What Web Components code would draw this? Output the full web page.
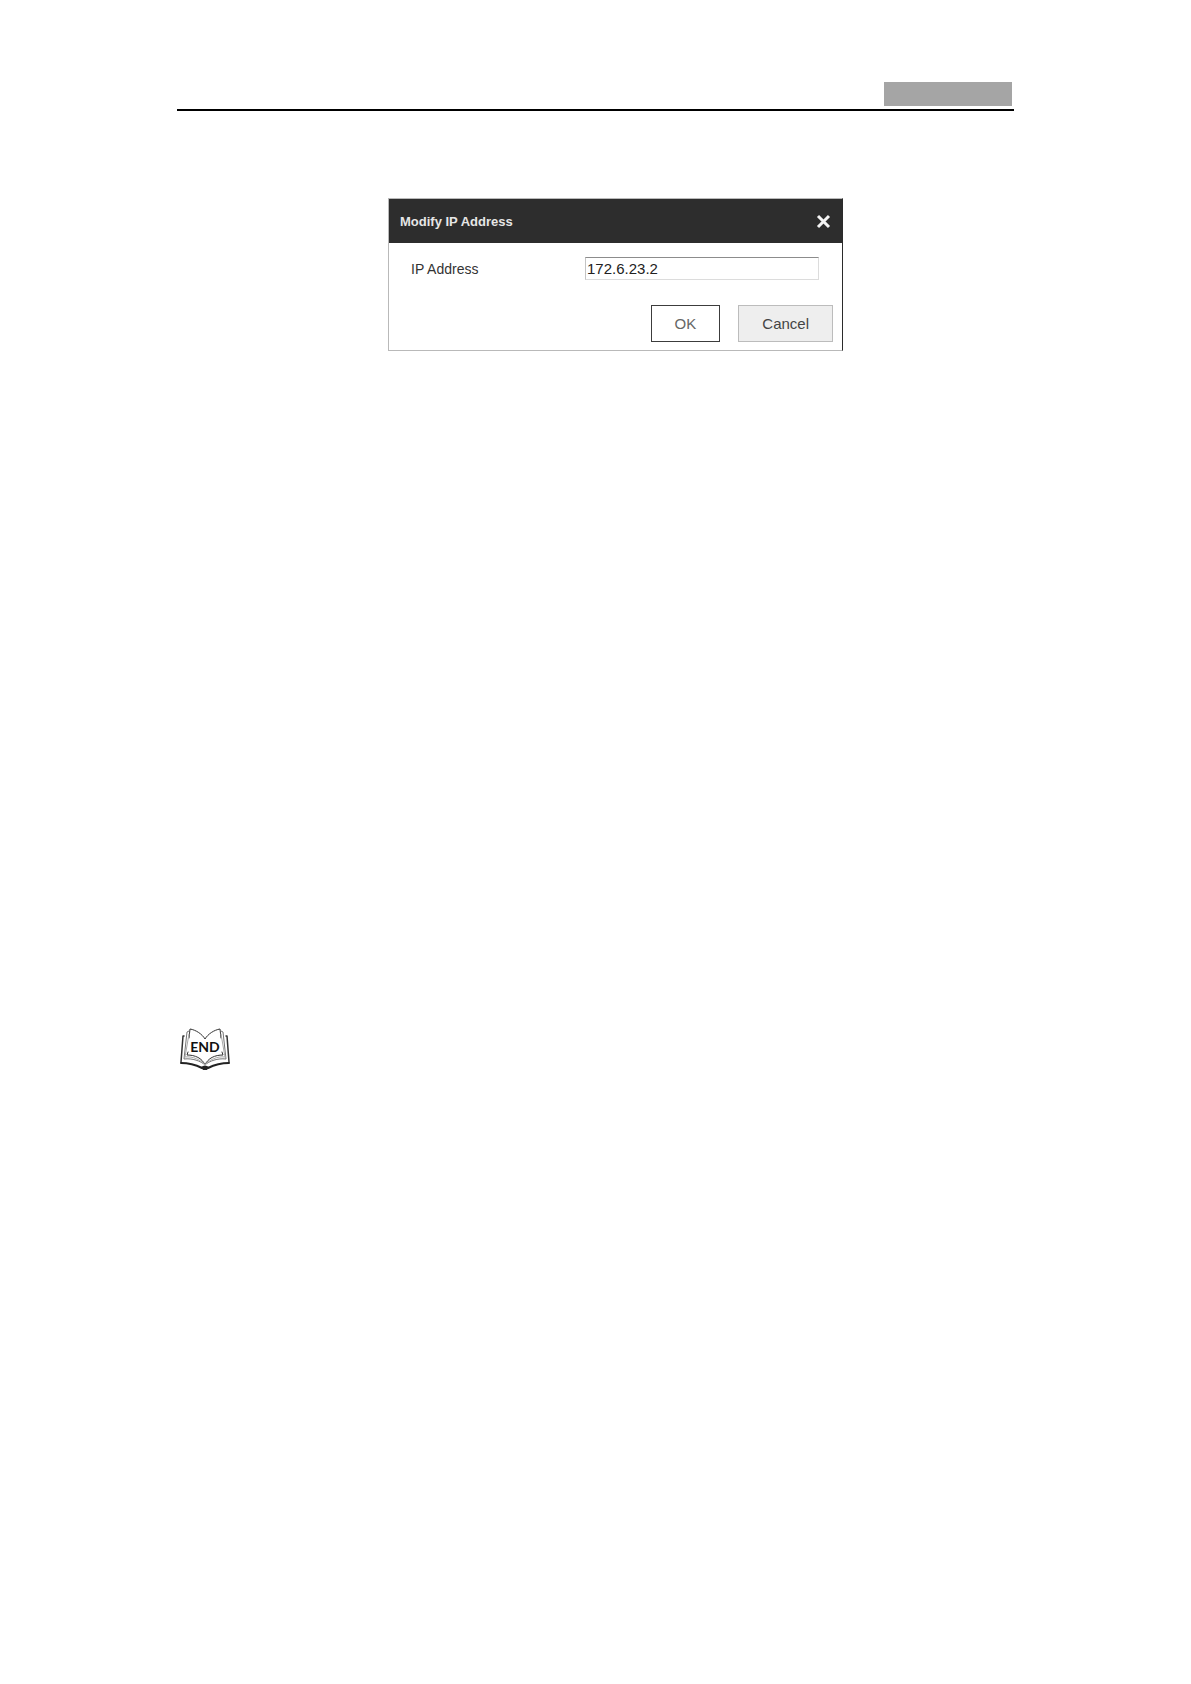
<!DOCTYPE html>
<html lang="en">
<head>
<meta charset="UTF-8">
<meta name="viewport" content="width=device-width, initial-scale=1">
<title>Modify IP Address</title>
<style>
    body {
        margin: 0;
        background: #fff;
        color: #333;
        font-family: "Liberation Sans", Arial, sans-serif;
    }
</style>
</head>
<body>
<manual-page>
    <page-header slot="header"></page-header>
    <ip-dialog heading="Modify IP Address">
        <text-field label="IP Address" value="172.6.23.2"></text-field>
        <dialog-button slot="actions" kind="primary">OK</dialog-button>
        <dialog-button slot="actions">Cancel</dialog-button>
    </ip-dialog>
    <end-mark slot="end"></end-mark>
</manual-page>

<script>
class ManualPage extends HTMLElement {
    constructor() {
        super();
        this.attachShadow({ mode: 'open' });
    }

    connectedCallback() {
        this.shadowRoot.innerHTML = `
            <style>
                :host {
                    display: flex;
                    flex-direction: column;
                    box-sizing: border-box;
                    min-height: 100vh;
                    max-width: 837px;
                    margin: 0 auto;
                    padding: 82px 0;
                }

                main {
                    display: flex;
                    justify-content: center;
                    padding: 87px 0 0 40px;
                }

                footer {
                    margin-top: 677px;
                }
            </style>
            <slot name="header"></slot>
            <main><slot></slot></main>
            <footer><slot name="end"></slot></footer>
        `;
    }
}

class PageHeader extends HTMLElement {
    constructor() {
        super();
        this.attachShadow({ mode: 'open' });
    }

    connectedCallback() {
        this.shadowRoot.innerHTML = `
            <style>
                :host {
                    display: flex;
                    justify-content: flex-end;
                    padding: 0 2px 3px;
                    border-bottom: 2px solid #000;
                }

                .tab {
                    width: 128px;
                    height: 24px;
                    background: #a5a5a5;
                }
            </style>
            <div class="tab"></div>
        `;
    }
}

class IpDialog extends HTMLElement {
    constructor() {
        super();
        this.attachShadow({ mode: 'open' });
    }

    connectedCallback() {
        const heading = this.getAttribute('heading');

        this.shadowRoot.innerHTML = `
            <style>
                :host {
                    display: block;
                    flex: 0 1 455px;
                }

                section {
                    border: 1px solid #b9b9b9;
                    border-right-color: #2b2b2b;
                }

                header {
                    display: flex;
                    align-items: center;
                    justify-content: space-between;
                    height: 44px;
                    padding: 0 11px;
                    background: #2d2d2d;
                }

                h1 {
                    margin: 0;
                    font-size: 13px;
                    font-weight: 700;
                    color: #e6e6e6;
                }

                .close {
                    display: flex;
                    padding: 0;
                    border: 0;
                    background: none;
                    cursor: pointer;
                }

                .body {
                    padding: 14px 23px 0 22px;
                }

                .actions {
                    display: flex;
                    justify-content: flex-end;
                    gap: 18px;
                    padding: 25px 9px 8px;
                }
            </style>
            <section role="dialog" aria-labelledby="heading">
                <header>
                    <h1 id="heading">${heading}</h1>
                    <button class="close" type="button" aria-label="Close">
                        <svg width="15" height="15" viewBox="0 0 15 15" fill="none" stroke="#f4f4f4" stroke-width="3">
                            <path d="M2 2 13 13M13 2 2 13"/>
                        </svg>
                    </button>
                </header>
                <div class="body"><slot></slot></div>
                <div class="actions"><slot name="actions"></slot></div>
            </section>
        `;
    }
}

class TextField extends HTMLElement {
    constructor() {
        super();
        this.attachShadow({ mode: 'open' });
    }

    connectedCallback() {
        const label = this.getAttribute('label');
        const value = this.getAttribute('value');

        this.shadowRoot.innerHTML = `
            <style>
                :host {
                    display: flex;
                    align-items: center;
                    justify-content: space-between;
                }

                label {
                    font-size: 14px;
                    color: #333;
                }

                input {
                    box-sizing: border-box;
                    width: 234px;
                    height: 23px;
                    padding: 0 1px;
                    border: 1px solid #dcdcdc;
                    border-top-color: #8c8c8c;
                    border-left-color: #c4c4c4;
                    background: #fff;
                    font: 15px "Liberation Sans", Arial, sans-serif;
                    color: #222;
                }
            </style>
            <label for="field">${label}</label>
            <input id="field" type="text" value="${value}">
        `;
    }
}

class DialogButton extends HTMLElement {
    constructor() {
        super();
        this.attachShadow({ mode: 'open' });
    }

    connectedCallback() {
        this.shadowRoot.innerHTML = `
            <style>
                :host {
                    display: block;
                }

                button {
                    height: 37px;
                    padding: 0 23px;
                    border: 1px solid #bcbcbc;
                    background: #eee;
                    font: 15px "Liberation Sans", Arial, sans-serif;
                    color: #444;
                    cursor: pointer;
                }

                :host([kind="primary"]) button {
                    border-color: #3c3c3c;
                    background: #fff;
                    color: #666;
                }
            </style>
            <button type="button"><slot></slot></button>
        `;
    }
}

// Open book with the word END across its pages
class EndMark extends HTMLElement {
    constructor() {
        super();
        this.attachShadow({ mode: 'open' });
    }

    connectedCallback() {
        this.shadowRoot.innerHTML = `
            <style>
                :host {
                    display: block;
                    padding-left: 3px;
                }

                svg {
                    display: block;
                }

                text {
                    font: 700 14px Lato, sans-serif;
                }
            </style>
            <svg width="50" height="43" viewBox="0 0 50 43" fill="none" stroke="#333" stroke-linecap="round" stroke-linejoin="round">
                <path d="M9 10 10 1C16 2 22 6 25 11C28 6 34 2 40 1L41 10" stroke-width="1"/>
                <path d="M8 24 7 27C15 27 22 30 25 37C28 30 35 27 43 27L42 24" stroke-width="1"/>
                <path d="M9 3 7 4 4 31C12 30 21 33 25 37C29 33 38 30 46 31L43 4 41 3" stroke-width="1" stroke="#777"/>
                <path d="M9 6 5 29C13 28 21 32 25 37C29 32 37 28 45 29L41 6" stroke-width="1" stroke="#aaa"/>
                <path d="M4 8H3L1 34M46 8H47L49 34" stroke-width="1.5"/>
                <path d="M1 35C9 35 16 37 22 40M49 35C41 35 34 37 28 40" stroke-width="2" stroke="#222"/>
                <path d="M21 39Q25 36 29 39L27 42H23Z" fill="#222" stroke="none"/>
                <text x="25" y="24" text-anchor="middle" fill="#111" stroke="none">END</text>
            </svg>
        `;
    }
}

customElements.define('manual-page', ManualPage);
customElements.define('page-header', PageHeader);
customElements.define('ip-dialog', IpDialog);
customElements.define('text-field', TextField);
customElements.define('dialog-button', DialogButton);
customElements.define('end-mark', EndMark);
</script>
</body>
</html>
